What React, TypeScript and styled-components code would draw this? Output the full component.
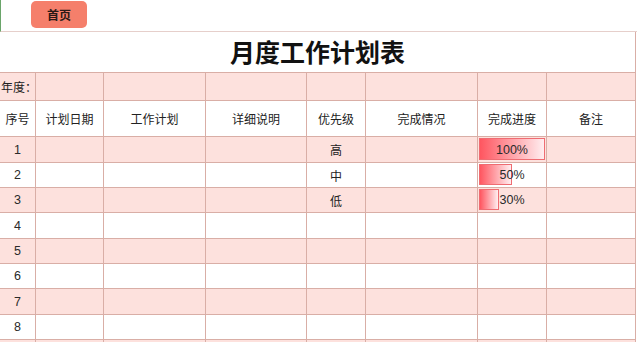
import React from "react";
import styled, { createGlobalStyle } from "styled-components";

const GlobalStyle = createGlobalStyle`
  html, body {
    margin: 0;
    padding: 0;
    background: #ffffff;
  }
  body {
    font-family: "Noto Sans CJK SC", "Liberation Sans", sans-serif;
    color: #222222;
    overflow: hidden;
  }
`;

const PINK = "#fde1dd";
const LINE = "#d9aea6";

const Page = styled.div`
  width: 640px;
  height: 342px;
  display: flex;
  flex-direction: column;
  overflow: hidden;
`;

const TopBar = styled.div`
  flex: none;
  display: flex;
  align-items: flex-start;
  padding-left: 30px;
  border-left: 1px solid #6aa56a;
  border-bottom: 1px solid #e6cfcb;
  box-sizing: border-box;
  width: 637px;
  height: 32px;
`;

const HomeButton = styled.button`
  margin-top: 1px;
  width: 56px;
  height: 27px;
  border: none;
  border-radius: 5px;
  background: #f57f6b;
  color: #2a1a16;
  font-family: "Noto Sans CJK SC", sans-serif;
  font-size: 12px;
  font-weight: 700;
  padding: 0;
  cursor: pointer;
`;

const Sheet = styled.div`
  display: grid;
  width: 636px;
  grid-template-columns: 36px 68px 102px 101px 59px 112px 69px 89px;
  grid-template-rows: 41px 28px 36px 26px 25px 25px 26px 25px 25px 26px 25px 26px 25px;
`;

const Title = styled.div`
  grid-column: 1 / -1;
  display: flex;
  align-items: center;
  justify-content: center;
  border-right: 1px solid ${LINE};
  border-bottom: 1px solid ${LINE};
  font-size: 25px;
  font-weight: 700;
  color: #111111;
  padding-bottom: 3px;
  box-sizing: border-box;
`;

const Cell = styled.div<{ $fill?: boolean; $align?: "left" | "center" }>`
  position: relative;
  display: flex;
  align-items: center;
  justify-content: ${(p) => (p.$align === "left" ? "flex-start" : "center")};
  padding-left: ${(p) => (p.$align === "left" ? "1px" : "0")};
  background: ${(p) => (p.$fill ? PINK : "#ffffff")};
  border-right: 1px solid ${LINE};
  border-bottom: 1px solid ${LINE};
  font-size: 12px;
  color: #222222;
  white-space: nowrap;
  overflow: hidden;
`;

const Bar = styled.div`
  position: absolute;
  left: 1px;
  top: 1px;
  bottom: 2px;
  box-sizing: border-box;
  border: 1px solid #ef6c72;
  background: linear-gradient(to right, #ff5660, #ffeef0);
`;

const Num = styled.span`
  position: relative;
  font-family: "Liberation Sans", "Noto Sans CJK SC", sans-serif;
  font-size: 12.5px;
  color: #2a2a2a;
`;

const headers = ["序号", "计划日期", "工作计划", "详细说明", "优先级", "完成情况", "完成进度", "备注"];

type Row = { no?: number; priority?: string; progress?: number };

const rows: Row[] = [
  { no: 1, priority: "高", progress: 100 },
  { no: 2, priority: "中", progress: 50 },
  { no: 3, priority: "低", progress: 30 },
  { no: 4 },
  { no: 5 },
  { no: 6 },
  { no: 7 },
  { no: 8 },
  {},
  {},
];

// progress cell is 69px wide, bar fills up to 66px
const BAR_MAX = 66;

const App = () => {
  return (
    <Page>
      <GlobalStyle />
      <TopBar>
        <HomeButton>首页</HomeButton>
      </TopBar>
      <Sheet>
        <Title>月度工作计划表</Title>

        <Cell $fill $align="left">年度：</Cell>
        {headers.slice(1).map((h) => (
          <Cell key={"y" + h} $fill />
        ))}

        {headers.map((h) => (
          <Cell key={h}>{h}</Cell>
        ))}

        {rows.map((r, i) => {
          const fill = i % 2 === 0;
          return (
            <React.Fragment key={i}>
              <Cell $fill={fill}>{r.no !== undefined && <Num>{r.no}</Num>}</Cell>
              <Cell $fill={fill} />
              <Cell $fill={fill} />
              <Cell $fill={fill} />
              <Cell $fill={fill}>{r.priority}</Cell>
              <Cell $fill={fill} />
              <Cell $fill={fill}>
                {r.progress !== undefined && (
                  <>
                    <Bar style={{ width: Math.round((BAR_MAX * r.progress) / 100) }} />
                    <Num>{r.progress}%</Num>
                  </>
                )}
              </Cell>
              <Cell $fill={fill} />
            </React.Fragment>
          );
        })}
      </Sheet>
    </Page>
  );
};

export default App;
